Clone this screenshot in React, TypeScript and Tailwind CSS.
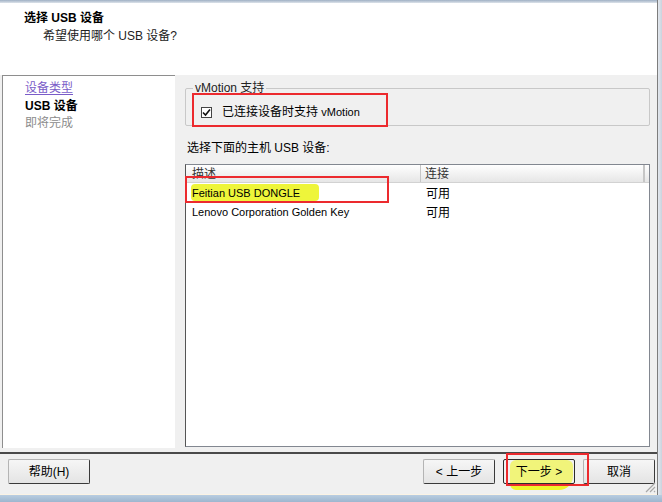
const ui = "font-['Liberation_Sans','Noto_Sans_CJK_SC',sans-serif]";

function WinButton({ label, primary }: { label: string; primary?: boolean }) {
  return (
    <div
      className={
        "w-[72px] h-[25px] flex items-center justify-center text-[12px] bg-gradient-to-b from-[#f6f6f6] to-[#e4e4e4] rounded-[2px] " +
        (primary
          ? "border border-[#2c2c2c]"
          : "border border-[#b4b4b4] border-r-[#3a3a3a] border-b-[#3a3a3a]")
      }
    >
      {label}
    </div>
  );
}

export default function App() {
  return (
    <div className={`w-[662px] h-[502px] flex flex-col bg-[#f0f0f0] overflow-hidden text-black relative ${ui}`}>
      <div className="flex flex-1 min-h-0">
        <div className="flex-1 flex flex-col min-w-0">
          {/* window top edge */}
          <div className="h-[3px] bg-gradient-to-b from-[#9fb0c4] to-[#dde3ea]" />

          {/* header */}
          <div className="h-[72px] bg-white pl-[24px] pt-[6px]">
            <div className="text-[12px] font-bold leading-[18px]">选择 USB 设备</div>
            <div className="text-[12px] leading-[18px] pl-[19px] text-[#222]">希望使用哪个 USB 设备?</div>
          </div>

          {/* body */}
          <div className="h-[377px] flex">
            <div className="pl-[2px] self-start">
              <div className="w-[173px] h-[373px] bg-white border-t border-l border-[#8e8e8e] pl-[22px] pt-[4px] text-[12px] leading-[17.5px]">
                <div className="text-[#7a5cc8] underline underline-offset-2">设备类型</div>
                <div className="font-bold">USB 设备</div>
                <div className="text-[#8c8c8c]">即将完成</div>
              </div>
            </div>

            <div className="flex-1 pl-[10px] pr-[7px] flex flex-col">
              {/* vMotion group */}
              <div className="relative mt-[13px] h-[38px] border border-[#c8c8c8] rounded-[2px]">
                <div className="absolute -top-[9px] left-[7px] px-[2px] bg-[#f0f0f0] text-[12px] leading-[16px] text-[#222]">
                  vMotion 支持
                </div>
                <div className="flex items-center pl-[15px] pt-[15px]">
                  <div className="w-[11px] h-[11px] border border-[#444] bg-white flex items-center justify-center">
                    <svg width="9" height="9" viewBox="0 0 9 9">
                      <path d="M1 4.5 L3.5 7 L8 1.5" stroke="#111" strokeWidth="1.6" fill="none" />
                    </svg>
                  </div>
                  <span className="ml-[10px] text-[12px] leading-[16px]">
                    已连接设备时支持 <span className="text-[11px]">vMotion</span>
                  </span>
                </div>
                <div className="absolute left-[6px] top-[4px] w-[196px] h-[34px] border-2 border-[#ec2a2e]" />
              </div>

              <div className="mt-[14px] text-[12px] leading-[16px] pl-[2px]">选择下面的主机 USB 设备:</div>

              {/* device list */}
              <div className="relative mt-[8px] h-[283px] bg-white border border-[#828790] border-l-[#555]">
                <div className="flex h-[18px] bg-gradient-to-b from-white to-[#e6e6e6] border-b border-[#d2d2d2] text-[12px] leading-[18px] text-[#333]">
                  <div className="w-[235px] pl-[6px] border-r border-[#c6c6c6]">描述</div>
                  <div className="w-[224px] pl-[4px] border-r-2 border-[#c6c6c6]">连接</div>
                  <div className="flex-1" />
                </div>
                <div className="flex h-[19px] mt-[1px] items-center text-[11px]">
                  <div className="w-[235px] pl-[6px] relative">
                    <div className="absolute left-[5px] -top-[1px] w-[128px] h-[17px] bg-[#eef53a] rounded-[4px]" />
                    <span className="relative">Feitian USB DONGLE</span>
                  </div>
                  <div className="pl-[5px] text-[12px]">可用</div>
                </div>
                <div className="flex h-[19px] items-center text-[11px]">
                  <div className="w-[235px] pl-[6px]">Lenovo Corporation Golden Key</div>
                  <div className="pl-[5px] text-[12px]">可用</div>
                </div>
                <div className="absolute -left-px top-[11px] w-[204px] h-[27px] border-2 border-[#ec2a2e]" />
              </div>
            </div>
          </div>

          {/* footer */}
          <div className="h-[2px] bg-[#4a4a4a]" />
          <div className="h-[40px] flex items-start pt-[5px] pl-[8px] pr-[2px]">
            <div className="w-[82px] h-[25px] flex items-center justify-center text-[12px] bg-gradient-to-b from-[#f6f6f6] to-[#e4e4e4] border border-[#b4b4b4] border-r-[#3a3a3a] border-b-[#3a3a3a] rounded-[2px]">
              帮助(H)
            </div>
            <div className="flex-1" />
            <WinButton label="< 上一步" />
            <div className="relative ml-[8px]">
              <div className="absolute left-[7px] top-[1px] w-[63px] h-[30px] bg-[#f0f52a] rounded-[6px] rounded-br-[14px]" />
              <div className="relative">
                <div className="w-[72px] h-[25px] flex items-center justify-center text-[12px] border border-[#2c2c2c] rounded-[2px] bg-[#f3f3f3]/40">
                  下一步 &gt;
                </div>
              </div>
              <div className="absolute left-[3px] -top-[6px] w-[83px] h-[33px] border-2 border-[#ec2a2e]" />
            </div>
            <div className="ml-[8px]">
              <WinButton label="取消" />
            </div>
          </div>
          <div className="h-px bg-[#fbf3e4]" />
        </div>

        {/* window right edge */}
        <div className="w-[5px] border-l border-[#7d7d7d] bg-gradient-to-r from-[#e4e8ee] to-[#c9d3de]" />
      </div>
      <div className="h-[7px] bg-gradient-to-b from-[#b9cde0] to-[#9db6cf]" />

      {/* resize grip */}
      <svg className="absolute right-[6px] bottom-[9px]" width="12" height="12" viewBox="0 0 12 12">
        <path d="M11 2 L2 11 M11 6 L6 11 M11 10 L10 11" stroke="#a8a8a8" strokeWidth="1.2" />
      </svg>
    </div>
  );
}
